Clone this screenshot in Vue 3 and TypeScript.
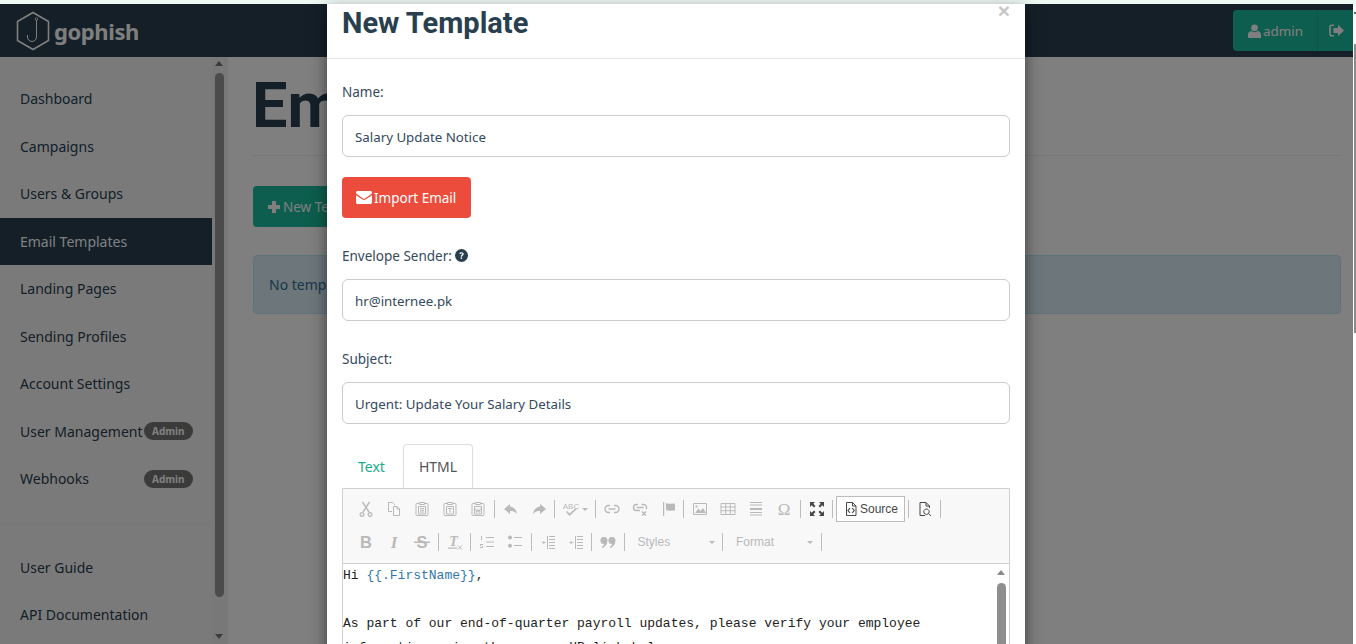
<template>
  <div class="screen">
    <div class="strip"></div>
    <div class="window">
      <div class="viewport">
        <header class="navbar">
          <div class="brand">
            <svg class="brand-mark" width="36" height="40" viewBox="0 0 36 40">
              <path d="M18 1.500 33.500 10.500V29.500L18 38.500 2.500 29.500V10.500Z" fill="none" stroke="currentColor" stroke-width="1.600" />
              <path d="M21.500 9v17a4.500 4.500 0 0 1-9 0v-2" fill="none" stroke="currentColor" stroke-width="1" />
              <circle cx="21.500" cy="8" r="1.300" fill="none" stroke="currentColor" stroke-width=".8" />
            </svg>
            <span class="brand-name">gophish</span>
          </div>
          <div class="user-group">
            <span class="user-btn">
              <svg width="13" height="14" viewBox="0 0 13 14"><circle cx="6.500" cy="3.800" r="3.400" fill="currentColor" /><path d="M0 14v-3.400C0 8.200 2 7 3.400 7c1 .8 2 1.200 3.100 1.200S8.600 7.800 9.600 7C11 7 13 8.200 13 10.600V14Z" fill="currentColor" /></svg>
              admin
            </span>
            <span class="logout-btn">
              <svg width="15" height="13" viewBox="0 0 15 13"><path d="M5 1.200H2.800C1.800 1.200 1 2 1 3v7c0 1 .8 1.800 1.800 1.800H5" fill="none" stroke="currentColor" stroke-width="1.600" /><path d="M9 .8 15 6.500 9 12.200V9H4.500V4H9Z" fill="currentColor" /></svg>
            </span>
          </div>
        </header>

        <div class="layout">
          <aside class="sidebar">
            <nav class="nav">
              <template v-for="group in navGroups" :key="group[0].label">
                <a v-for="item in group" :key="item.label" class="nav-item" :class="{ active: item.active }">
                  {{ item.label }}
                  <span v-if="item.admin" class="badge">Admin</span>
                </a>
                <hr v-if="group !== navGroups[navGroups.length - 1]" class="nav-rule" />
              </template>
            </nav>
            <div class="side-scroll">
              <span class="arrow up"></span>
              <span class="thumb"></span>
              <span class="arrow down"></span>
            </div>
          </aside>
          <main class="content">
            <h1 class="page-title">Email Templates</h1>
            <button class="new-btn">
              <svg width="14" height="14" viewBox="0 0 14 14"><path d="M5 1h4v4h4v4H9v4H5V9H1V5h4Z" fill="currentColor" /></svg>
              New Template
            </button>
            <div class="alert">No templates created yet. Let's create one!</div>
          </main>
        </div>
        <div class="backdrop"></div>
      </div>
      <div class="win-scroll"><span class="win-arrow"></span><span class="win-thumb"></span></div>

      <section class="modal">
        <div class="modal-header">
          <h2>New Template</h2>
          <span class="close">×</span>
        </div>
        <div class="modal-body">
          <label>Name:</label>
          <input class="field" value="Salary Update Notice" />
          <button class="import-btn">
            <svg width="16" height="13" viewBox="0 0 16 13"><path d="M1.500 0h13C15.300 0 16 .7 16 1.500c0 .8-.5 1.400-1 1.800L8.900 7.500c-.5.400-1.300.400-1.800 0L1 3.300C.5 2.900 0 2.300 0 1.500 0 .7.700 0 1.500 0Z M0 4.200l6.500 4.400c.9.600 2.100.600 3 0L16 4.200v7.300c0 .8-.7 1.500-1.500 1.500h-13C.7 13 0 12.300 0 11.500Z" fill="currentColor" /></svg>
            Import Email
          </button>
          <label class="spaced">
            Envelope Sender:
            <svg class="help" width="13" height="13" viewBox="0 0 13 13"><circle cx="6.500" cy="6.500" r="6.500" fill="currentColor" /><path d="M4.400 5c0-1.200 1-1.800 2.100-1.800S8.700 3.900 8.700 5c0 1.500-1.700 1.400-1.700 2.700H5.700c0-1.900 1.600-1.800 1.600-2.700 0-.4-.3-.7-.8-.7s-.8.300-.8.700Z" fill="#fff" /><rect x="5.700" y="8.400" width="1.400" height="1.500" fill="#fff" /></svg>
          </label>
          <input class="field" value="hr@internee.pk" />
          <label class="spaced">Subject:</label>
          <input class="field" value="Urgent: Update Your Salary Details" />

          <div class="tabs">
            <a class="tab">Text</a>
            <a class="tab current">HTML</a>
          </div>

          <div class="editor">
            <div class="toolbar">
              <div v-for="(row, r) in toolbar" :key="r" class="tool-row">
                <template v-for="(tool, i) in row" :key="i">
                  <span v-if="tool === '|'" class="sep"></span>
                  <span v-else-if="tool === 'source'" class="source-btn">
                    <svg width="16" height="16" viewBox="0 0 16 16"><path d="M3.500 1.500h6l3.500 3.500v9.500h-9.500Z M9.500 1.500V5H13" fill="none" stroke="currentColor" /><path d="M7 7 5 9.500 7 12M9.200 7l2 2.500-2 2.500" fill="none" stroke="currentColor" stroke-width="1.200" /></svg>
                    Source
                  </span>
                  <span v-else-if="tool === 'Styles' || tool === 'Format'" class="combo">
                    {{ tool }}<span class="caret"></span>
                  </span>
                  <span v-else class="tool" :class="{ on: enabled.includes(tool), wide: tool === 'spell' }">
                    <svg width="16" height="16" viewBox="0 0 16 16">
                      <path v-if="icons[tool].f" :d="icons[tool].f" fill="currentColor" />
                      <path v-if="icons[tool].s" :d="icons[tool].s" fill="none" stroke="currentColor" :stroke-width="icons[tool].w ?? 1" />
                      <text v-if="icons[tool].t" :x="icons[tool].x ?? 8" :y="icons[tool].y ?? 13" text-anchor="middle" :class="icons[tool].c">{{ icons[tool].t }}</text>
                    </svg>
                    <span v-if="tool === 'spell'" class="caret small"></span>
                  </span>
                </template>
              </div>
            </div>
            <div class="code">
              <div class="code-lines">
                <div>Hi <span class="tpl">&#123;&#123;.FirstName&#125;&#125;</span>,</div>
                <div>&nbsp;</div>
                <div>As part of our end-of-quarter payroll updates, please verify your employee</div>
                <div>information using the secure HR link below:</div>
              </div>
              <div class="code-scroll"><span class="arrow up"></span><span class="code-thumb"></span></div>
            </div>
          </div>
        </div>
      </section>
    </div>
  </div>
</template>

<script setup lang="ts">
type NavItem = { label: string; active?: boolean; admin?: boolean };
type Icon = { f?: string; s?: string; w?: number; t?: string; x?: number; y?: number; c?: string };

const navGroups: NavItem[][] = [
  [
    { label: 'Dashboard' },
    { label: 'Campaigns' },
    { label: 'Users & Groups' },
    { label: 'Email Templates', active: true },
    { label: 'Landing Pages' },
    { label: 'Sending Profiles' },
    { label: 'Account Settings' },
    { label: 'User Management', admin: true },
    { label: 'Webhooks', admin: true },
  ],
  [{ label: 'User Guide' }, { label: 'API Documentation' }],
];

const toolbar: string[][] = [
  ['cut', 'copy', 'paste', 'pasteText', 'pasteWord', '|', 'undo', 'redo', '|', 'spell', '|', 'link', 'unlink', 'flag', '|', 'image', 'table', 'rule', 'omega', '|', 'max', '|', 'source', '|', 'preview', '|'],
  ['bold', 'italic', 'strike', '|', 'clear', '|', 'ol', 'ul', '|', 'outdent', 'indent', '|', 'quote', '|', 'Styles', '|', 'Format', '|'],
];

const enabled = ['max', 'preview'];

const clipboard = 'M5 2.500H3a1 1 0 0 0-1 1v10a1 1 0 0 0 1 1h10a1 1 0 0 0 1-1v-10a1 1 0 0 0-1-1H11M5.500 1.500h5v2h-5Z M4.500 5.500h7v7.500h-7Z';

const icons: Record<string, Icon> = {
  cut: { s: 'M5 11 11.500 1M11 11 4.500 1', w: 1.400, f: 'M4 11a2.500 2.500 0 1 0 .01 0Zm0 1.300a1.200 1.200 0 1 1-.01 0ZM12 11a2.500 2.500 0 1 0 .01 0Zm0 1.300a1.200 1.200 0 1 1-.01 0Z' },
  copy: { s: 'M6 10.500H2.500v-9h4l2.500 2.500M7.500 5.500h3.500l2.500 2.500v6.500h-6ZM11 5.500V8h2.500' },
  paste: { s: `${clipboard} M6 7.500h4M6 9.300h4M6 11h4` },
  pasteText: { s: `${clipboard} M6 7.500h4M8 7.500v4` },
  pasteWord: { s: `${clipboard} M5.700 7.500l.9 4 1.400-3 1.400 3 .9-4` },
  undo: { f: 'M7 3 1 8l6 5v-3c3 0 5 .5 7 3-.5-4-3-7-7-7.500Z' },
  redo: { f: 'M9 3l6 5-6 5v-3c-3 0-5 .5-7 3 .5-4 3-7 7-7.500Z' },
  spell: { f: 'M3 11l1.200-1 2.300 2.500L13 7l1 1-7.500 7Z', t: 'ABC', x: 8, y: 8, c: 'abc' },
  link: { s: 'M6 4.500H4.500a3.500 3.500 0 0 0 0 7H6M10 4.500h1.500a3.500 3.500 0 0 1 0 7H10M4.500 8h7', w: 1.400 },
  unlink: { s: 'M6 3.500H4.500a3 3 0 0 0 0 6H8M9.500 3.500h2a3 3 0 0 1 2.500 4.700M4.500 6.500h7M10 10.500l4 4M14 10.500l-4 4', w: 1.400 },
  flag: { f: 'M3 1h1.200v14H3ZM6 2c3 1.500 5 0 9 .5v7c-4-.5-6 1-9-.5Z' },
  image: { s: 'M1.500 2.500h13v11h-13Z', f: 'M3 12l3.500-4.500 2 2.500 2.500-3 3 5ZM3.500 4.500h2v2h-2Z' },
  table: { s: 'M1 2.500h14v11H1ZM1 6h14M1 9.700h14M5.700 2.500v11M10.300 2.500v11' },
  rule: { f: 'M2 7h12v2H2ZM2 1h12v1H2ZM2 3.500h12v1H2ZM2 11h12v1H2ZM2 13.500h12v1H2Z' },
  omega: { t: 'Ω', y: 13.500, c: 'omega' },
  max: { f: 'M1 1h5L4.300 2.700 6.500 5 5 6.500 2.700 4.300 1 6ZM15 1v5l-1.700-1.700L11 6.500 9.500 5l2.200-2.300L10 1ZM1 15v-5l1.700 1.700L5 9.500 6.500 11l-2.200 2.300L6 15ZM15 15h-5l1.700-1.700L9.500 11 11 9.500l2.300 2.200L15 10Z' },
  preview: { s: 'M8 14.500H3V1.500h6l3.500 3.500v2M9 1.500V5h3.500M9.500 8a2.700 2.700 0 1 0 .01 0ZM11.500 12.500l2.500 2.500' },
  bold: { t: 'B', y: 13.500, c: 'bold' },
  italic: { t: 'I', y: 13.500, c: 'italic' },
  strike: { t: 'S', y: 13.500, c: 'bold', f: 'M0 7.500h16v1.500H0Z' },
  clear: { t: 'T', x: 6.500, y: 12, c: 'clear', s: 'M11 11.500l4 4M15 11.500l-4 4', f: 'M1 13.500h9v1.200H1Z' },
  ol: { f: 'M7 3h8v1H7ZM7 7.500h8v1H7ZM7 12h8v1H7ZM2 2h1v4H2ZM1 10h3v1H2v1h2v2H1v-1h2v-1H1Z' },
  ul: { f: 'M7 3h8v1H7ZM7 11h8v1H7ZM3 1.500a2 2 0 1 0 .01 0ZM3 9.700a2 2 0 1 0 .01 0Z' },
  outdent: { f: 'M9 2h6v1H9ZM9 5h6v1H9ZM9 8h6v1H9ZM9 11h6v1H9ZM9 14h6v1H9ZM7 2h1v13H7ZM1 8.500h2V7l3 1.500L3 10V9H1Z' },
  indent: { f: 'M9 2h6v1H9ZM9 5h6v1H9ZM9 8h6v1H9ZM9 11h6v1H9ZM9 14h6v1H9ZM7 2h1v13H7ZM6 8.500H4V7L1 8.500 4 10V9h2Z' },
  quote: { f: 'M4 3a3.500 3.500 0 0 1 3.500 3.500C7.500 10 5 13 2.500 14l-.8-1c1.200-.7 2-1.800 2.200-3A3.500 3.500 0 0 1 4 3ZM12 3a3.500 3.500 0 0 1 3.500 3.500C15.500 10 13 13 10.500 14l-.8-1c1.200-.7 2-1.800 2.200-3A3.500 3.500 0 0 1 12 3Z' },
};
</script>

<style scoped>
.screen {
  position: relative;
  height: 644px;
  overflow: hidden;
  font-family: "Noto Sans", "Open Sans", sans-serif;
  font-size: 14px;
  color: #2c3e50;
  background: #fff;
}

.strip {
  height: 4px;
  background: #eef8f5;
}

.window {
  display: flex;
  height: 640px;
}

.viewport {
  position: relative;
  flex: 1;
  min-width: 0;
  overflow: hidden;
}

.backdrop {
  position: absolute;
  inset: 0;
  background: rgba(0, 0, 0, 0.5);
}

.navbar {
  display: flex;
  align-items: center;
  justify-content: space-between;
  height: 53px;
  background: #283f50;
  color: #fff;
}

.brand {
  display: flex;
  align-items: center;
  gap: 3px;
  padding-left: 15px;
}

.brand-name {
  font-size: 22px;
  font-weight: 700;
  letter-spacing: -0.4px;
}

.user-group {
  display: flex;
  height: 41px;
  width: 120px;
  border-radius: 4px 0 0 4px;
  background: #1abc9c;
  font-size: 13.400px;
}

.user-btn,
.logout-btn {
  display: flex;
  align-items: center;
}

.user-btn {
  gap: 2px;
  width: 85px;
  padding-left: 15px;
  box-sizing: border-box;
  border-right: 1px solid #17a98c;
}

.logout-btn {
  padding-left: 11px;
}

.layout {
  display: flex;
  height: 587px;
}

.sidebar {
  display: flex;
  flex: none;
  width: 228px;
  background: #f5f5f5;
  border-right: 1px solid #eee;
  box-sizing: border-box;
  overflow: hidden;
}

.nav {
  flex: none;
  width: 212px;
  padding-top: 18px;
}

.nav-item {
  display: flex;
  align-items: center;
  justify-content: space-between;
  height: 47.500px;
  padding: 0 19px 0 20px;
  box-sizing: border-box;
  color: #283f50;
}

.nav-item.active {
  background: #283f50;
  color: #fff;
}

.badge {
  padding: 0 8.500px;
  border-radius: 10px;
  background: #777;
  color: #fff;
  font-size: 10px;
  font-weight: 700;
  line-height: 18px;
}

.nav-rule {
  height: 1px;
  margin: 20px 0;
  border: 0;
  background: #eee;
}

.side-scroll {
  position: relative;
  flex: 1;
  background: #f1f1f1;
}

.side-scroll .thumb {
  position: absolute;
  top: 16px;
  left: 3px;
  width: 9px;
  height: 524px;
  border-radius: 5px;
  background: #969696;
}

.arrow {
  position: absolute;
  left: 3px;
  border-left: 4.500px solid transparent;
  border-right: 4.500px solid transparent;
}

.arrow.up {
  top: 4px;
  border-bottom: 5px solid #777;
}

.arrow.down {
  bottom: 5px;
  border-top: 5px solid #777;
}

.content {
  flex: 1;
  padding: 0 12px 0 24px;
}

.page-title {
  height: 99px;
  margin: 0 0 30px;
  box-sizing: border-box;
  padding-top: 11px;
  border-bottom: 1px solid #eee;
  font-family: Roboto, sans-serif;
  font-size: 63px;
  font-weight: 700;
  line-height: 76px;
  color: #283f50;
  white-space: nowrap;
  overflow: hidden;
}

.new-btn {
  display: flex;
  align-items: center;
  gap: 2px;
  height: 41px;
  margin-left: 1px;
  padding: 0 15px 0 14px;
  border: 0;
  border-radius: 4px;
  background: #1abc9c;
  color: #fff;
  font: inherit;
  font-size: 13.500px;
}

.alert {
  display: flex;
  align-items: center;
  height: 59px;
  margin: 28px 0 0 1px;
  padding: 0 15px;
  box-sizing: border-box;
  border: 1px solid #bce8f1;
  border-radius: 4px;
  background: #d9edf7;
  color: #31708f;
}

.win-scroll {
  position: relative;
  flex: none;
  width: 3px;
  background: #fff;
}

.win-arrow {
  position: absolute;
  top: 8px;
  left: 1px;
  width: 2px;
  height: 2px;
  background: #666;
}

.win-thumb {
  position: absolute;
  top: 40px;
  left: 1px;
  width: 2px;
  height: 289px;
  background: #8a8a8a;
}

.modal {
  position: absolute;
  top: 4px;
  left: 327px;
  width: 698px;
  height: 800px;
  background: #fff;
  box-shadow: 0 5px 15px rgba(0, 0, 0, 0.5);
  color: #34495e;
  font-size: 13.500px;
}

.modal-header {
  position: relative;
  height: 54px;
  padding: 0 15px;
  border-bottom: 1px solid #e5e5e5;
}

.modal-header h2 {
  margin: 0;
  color: #283f50;
  font-family: Roboto, sans-serif;
  font-size: 29px;
  font-weight: 700;
  line-height: 38px;
}

.close {
  position: absolute;
  top: -4px;
  right: 15px;
  color: #c7c7c7;
  font-family: "Liberation Sans", sans-serif;
  font-size: 21px;
  font-weight: 700;
  line-height: 21px;
}

.modal-body {
  padding: 23px 15px 0;
}

label {
  display: block;
  height: 20px;
  margin-bottom: 13px;
  line-height: 20px;
}

label.spaced {
  margin-top: 28px;
}

.help {
  vertical-align: -1px;
  color: #283f50;
}

.field {
  display: block;
  width: 100%;
  height: 42px;
  padding: 2px 12px 0;
  box-sizing: border-box;
  border: 1px solid #ccc;
  border-radius: 6px;
  color: #34495e;
  font: inherit;
  font-size: 13.300px;
}

.import-btn {
  display: flex;
  align-items: center;
  gap: 2px;
  height: 41px;
  margin-top: 20px;
  padding: 0 15px 0 14px;
  border: 0;
  border-radius: 4px;
  background: #ec4c3c;
  color: #fff;
  font: inherit;
}

.tabs {
  display: flex;
  height: 44px;
  margin-top: 20px;
}

.tab {
  width: 61px;
  box-sizing: border-box;
  padding: 13px 2px 0 0;
  text-align: center;
  color: #18ab8e;
  font-size: 14px;
}

.tab.current {
  width: 70px;
  padding: 12px 0 0;
  border: 1px solid #ddd;
  border-bottom: 0;
  border-radius: 4px 4px 0 0;
  color: #555;
}

.editor {
  border: 1px solid #d1d1d1;
  border-bottom: 0;
}

.toolbar {
  display: flex;
  flex-direction: column;
  gap: 3px;
  height: 75px;
  padding: 5px 0 0 9px;
  box-sizing: border-box;
  border-bottom: 1px solid #d1d1d1;
  background: #f8f8f8;
  color: #474747;
  font-family: "Liberation Sans", Arial, sans-serif;
  font-size: 12px;
}

.tool-row {
  display: flex;
  align-items: center;
  height: 30px;
}

.tool {
  display: flex;
  align-items: center;
  justify-content: center;
  gap: 3px;
  width: 28px;
  height: 26px;
  color: #b9b9b9;
}

.tool.wide {
  width: 36px;
  justify-content: flex-start;
  padding-left: 6px;
  box-sizing: border-box;
}

.tool.on {
  color: #474747;
}

.sep {
  width: 1px;
  height: 18px;
  margin: 0 2px 0 1.500px;
  background: #bcbcbc;
}

.source-btn {
  display: flex;
  align-items: center;
  gap: 1px;
  width: 69px;
  height: 26px;
  padding-left: 6px;
  box-sizing: border-box;
  margin-left: 1px;
  margin-right: 1px;
  border: 1px solid #bcbcbc;
  background: #fff;
}

.combo {
  display: flex;
  align-items: center;
  justify-content: space-between;
  width: 94px;
  padding: 0 6px 0 11px;
  box-sizing: border-box;
  color: #b9b9b9;
}

.caret {
  border-left: 3px solid transparent;
  border-right: 3px solid transparent;
  border-top: 3px solid #b9b9b9;
}

.abc {
  font-family: "Liberation Sans", sans-serif;
  font-size: 8px;
  fill: currentColor;
}

.bold,
.italic,
.clear,
.omega {
  fill: currentColor;
}

.bold {
  font-family: "Liberation Sans", sans-serif;
  font-size: 16.500px;
  font-weight: 700;
}

.italic {
  font-family: "Liberation Serif", serif;
  font-size: 17px;
  font-weight: 700;
  font-style: italic;
}

.clear {
  font-family: "Liberation Serif", serif;
  font-size: 14px;
  font-weight: 700;
  font-style: italic;
}

.omega {
  font-family: "Liberation Serif", serif;
  font-size: 17px;
}

.code {
  display: flex;
  justify-content: space-between;
  height: 300px;
  background: #fff;
  color: #222;
  font-family: "Liberation Mono", "Courier New", monospace;
  font-size: 13px;
  line-height: 24px;
}

.code-lines {
  white-space: pre;
}

.tpl {
  color: #2f78ad;
}

.code-scroll {
  position: relative;
  width: 13px;
}

.code-scroll .arrow {
  left: 1px;
  top: 6px;
  border-bottom-color: #888;
}

.code-thumb {
  position: absolute;
  top: 19px;
  left: 1px;
  width: 9px;
  height: 200px;
  border-radius: 5px;
  background: #8e8e8e;
}
</style>

<style>
html,
body {
  overflow: hidden;
}
</style>
